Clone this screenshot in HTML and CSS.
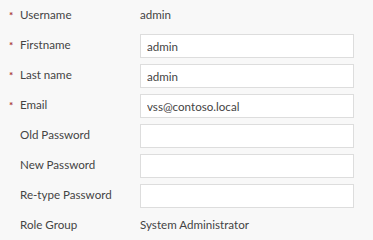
FILE: index.html
```html
<!DOCTYPE html>
<html lang="en">
<head>
    <meta charset="UTF-8">
    <meta name="viewport" content="width=device-width, initial-scale=1.0">
    <title>Profile</title>
    <link rel="stylesheet" href="styles.css">
</head>
<body>
    <form class="profile-form">
        <div class="form-row">
            <label class="required">Username</label>
            <span class="value">admin</span>
        </div>
        <div class="form-row">
            <label class="required" for="firstName">Firstname</label>
            <input type="text" id="firstName" value="admin">
        </div>
        <div class="form-row">
            <label class="required" for="lastName">Last name</label>
            <input type="text" id="lastName" value="admin">
        </div>
        <div class="form-row">
            <label class="required" for="email">Email</label>
            <input type="text" id="email" value="vss@contoso.local">
        </div>
        <div class="form-row">
            <label for="oldPassword">Old Password</label>
            <input type="password" id="oldPassword">
        </div>
        <div class="form-row">
            <label for="newPassword">New Password</label>
            <input type="password" id="newPassword">
        </div>
        <div class="form-row">
            <label for="retypePassword">Re-type Password</label>
            <input type="password" id="retypePassword">
        </div>
        <div class="form-row">
            <label>Role Group</label>
            <span class="value">System Administrator</span>
        </div>
    </form>
</body>
</html>
```

FILE: styles.css
```css
body {
    margin: 0;
    background-color: #f8f8f8;
    font-family: Lato, "Open Sans", sans-serif;
    font-size: 11.6px;
    color: #444;
}
.profile-form {
    padding-top: 1px;
}
.form-row {
    display: grid;
    grid-template-columns: 140px 214px;
    align-items: center;
    height: 30px;
}
label,
.value {
    position: relative;
    margin-top: -3px;
}
label {
    padding-left: 20px;
}
label.required::before {
    content: "*";
    position: absolute;
    left: 9px;
    top: 1px;
    color: #a33;
    font-size: 10px;
    font-weight: bold;
}
input {
    box-sizing: border-box;
    height: 24px;
    width: 214px;
    margin: 0;
    padding: 0 6px;
    border: 1px solid #ddd;
    background-color: #fff;
    font-family: inherit;
    font-size: 11.6px;
    color: #444;
    outline: none;
}
```
